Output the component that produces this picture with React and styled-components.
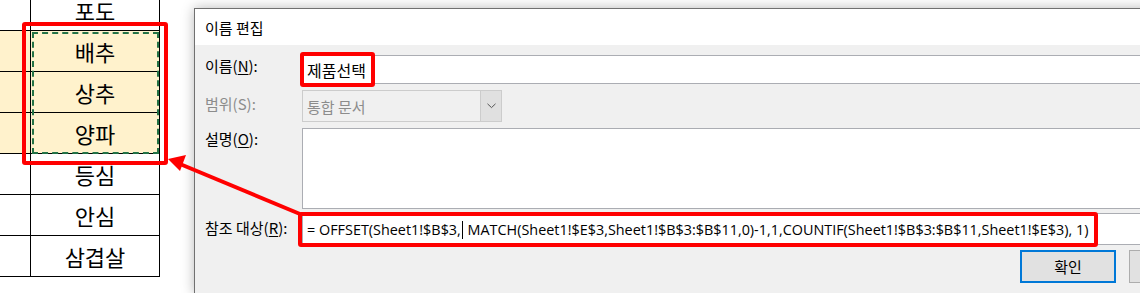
import React from "react";
import styled, { createGlobalStyle } from "styled-components";

const GlobalStyle = createGlobalStyle`
  html, body {
    margin: 0;
    padding: 0;
    background: #ffffff;
    overflow: hidden;
  }
  #root {
    width: 1140px;
    height: 293px;
    overflow: hidden;
  }
`;

const KR = `"Noto Sans CJK KR", "Noto Sans", sans-serif`;

const Page = styled.div`
  position: relative;
  display: flex;
  align-items: flex-start;
  width: 1140px;
  height: 293px;
  overflow: hidden;
  background: #ffffff;
`;

const Sheet = styled.div`
  position: relative;
  display: grid;
  grid-template-columns: 31px 128px;
  grid-auto-rows: 41px;
  margin-top: -10px;
  flex: none;
  border-right: 1px solid #000;
`;

const Cell = styled.div`
  display: flex;
  align-items: center;
  justify-content: center;
  border-bottom: 1px solid #000;
  border-right: ${(p) => (p.$first ? "1px solid #000" : "none")};
  background: ${(p) => (p.$picked ? "#fff2cc" : "#ffffff")};
  font-family: ${KR};
  font-size: 22px;
  color: #000;
  box-sizing: border-box;
`;

const Ants = styled.div`
  position: absolute;
  left: 32px;
  top: 42px;
  width: 127px;
  height: 122px;
  box-sizing: border-box;
  border: 2px dashed #237346;
`;

const RedBox = styled.div`
  position: absolute;
  box-sizing: border-box;
  border: 4px solid #ff0000;
  border-radius: 3px;
  pointer-events: none;
`;

const Dialog = styled.div`
  flex: none;
  width: 1050px;
  margin-left: 34px;
  margin-top: 8px;
  border: 1px solid #707070;
  background: #f0f0f0;
  box-shadow: 0 0 12px rgba(0, 0, 0, 0.28);
  font-family: ${KR};
`;

const TitleBar = styled.div`
  height: 36px;
  display: flex;
  align-items: center;
  padding-left: 10px;
  background: #ffffff;
  font-size: 15px;
  color: #000;
`;

const Body = styled.div`
  display: grid;
  grid-template-columns: 97px 1fr;
  padding: 10px 20px 10px 10px;
`;

const Label = styled.div`
  font-size: 15px;
  line-height: 20px;
  padding-top: ${(p) => p.$top}px;
  margin-top: ${(p) => p.$gap || 0}px;
  color: ${(p) => (p.$disabled ? "#8c8c8c" : "#000")};
  white-space: nowrap;
  u {
    text-underline-offset: 2px;
  }
`;

const Field = styled.div`
  position: relative;
  height: ${(p) => p.$h}px;
  margin-top: ${(p) => p.$gap || 0}px;
  box-sizing: border-box;
  background: #ffffff;
  border: 1px solid #abadb3;
  display: flex;
  align-items: center;
  padding-left: 4px;
  font-size: 16px;
  color: #000;
  white-space: nowrap;
`;

const Combo = styled.div`
  width: 200px;
  height: 32px;
  margin-top: 6px;
  box-sizing: border-box;
  border: 1px solid #cccccc;
  background: #f0f0f0;
  display: flex;
  align-items: stretch;
`;

const ComboText = styled.div`
  flex: 1;
  display: flex;
  align-items: center;
  padding-left: 4px;
  font-size: 15px;
  color: #8c8c8c;
`;

const ComboButton = styled.div`
  width: 20px;
  background: #e0e0e0;
  border-left: 1px solid #cccccc;
  display: flex;
  align-items: center;
  justify-content: center;
`;

const Formula = styled.span`
  font-family: "Open Sans", "Noto Sans", sans-serif;
  font-size: 14.4px;
  color: #000;
  white-space: pre;
`;

const Caret = styled.span`
  display: inline-block;
  width: 1px;
  height: 18px;
  background: #000;
  vertical-align: -4px;
  margin: 0 1px;
`;

const Buttons = styled.div`
  grid-column: 1 / span 2;
  display: flex;
  justify-content: flex-end;
  gap: 13px;
  margin-top: 5px;
`;

const Button = styled.div`
  width: 96px;
  height: 33px;
  box-sizing: border-box;
  display: flex;
  align-items: center;
  justify-content: center;
  background: #e1e1e1;
  border: ${(p) => (p.$default ? "2px solid #0078d7" : "1px solid #adadad")};
  font-size: 15px;
  color: #000;
`;

const Overlay = styled.svg`
  position: absolute;
  left: 0;
  top: 0;
  pointer-events: none;
`;

const rows = [
  { name: "포도" },
  { name: "배추", picked: true },
  { name: "상추", picked: true },
  { name: "양파", picked: true },
  { name: "등심" },
  { name: "안심" },
  { name: "삼겹살" },
];

export default function App() {
  return (
    <Page>
      <GlobalStyle />
      <Sheet>
        {rows.map((r) => (
          <React.Fragment key={r.name}>
            <Cell $first $picked={r.picked} />
            <Cell $picked={r.picked}>{r.name}</Cell>
          </React.Fragment>
        ))}
        <Ants />
      </Sheet>

      <Dialog>
        <TitleBar>이름 편집</TitleBar>
        <Body>
          <Label $top={1}>
            이름(<u>N</u>):
          </Label>
          <Field $h={29}>
            제품선택
            <RedBox style={{ left: -3, top: -4, width: 75, height: 35 }} />
          </Field>

          <Label $top={4} $gap={6} $disabled>
            범위(S):
          </Label>
          <Combo>
            <ComboText>통합 문서</ComboText>
            <ComboButton>
              <svg width="9" height="6" viewBox="0 0 9 6">
                <path d="M0.5 0.8 L4.5 4.6 L8.5 0.8" fill="none" stroke="#555" strokeWidth="1" />
              </svg>
            </ComboButton>
          </Combo>

          <Label $top={1} $gap={6}>
            설명(<u>O</u>):
          </Label>
          <Field $h={81} $gap={6} />

          <Label $top={5} $gap={4}>
            참조 대상(<u>R</u>):
          </Label>
          <Field $h={32} $gap={4}>
            <Formula>
              {"= OFFSET(Sheet1!$B$3,"}
              <Caret />
              {" MATCH(Sheet1!$E$3,Sheet1!$B$3:$B$11,0)-1,1,COUNTIF(Sheet1!$B$3:$B$11,Sheet1!$E$3), 1)"}
            </Formula>
          </Field>

          <Buttons>
            <Button $default>확인</Button>
            <Button>취소</Button>
          </Buttons>
        </Body>
      </Dialog>

      <RedBox style={{ left: 22, top: 22, width: 146, height: 143 }} />
      <RedBox style={{ left: 298, top: 212, width: 800, height: 35 }} />

      <Overlay width="1140" height="293" viewBox="0 0 1140 293">
        <line x1="300" y1="214" x2="180" y2="164" stroke="#ff0000" strokeWidth="4" />
        <polygon points="168,159 186,155 180,171" fill="#ff0000" />
      </Overlay>
    </Page>
  );
}
